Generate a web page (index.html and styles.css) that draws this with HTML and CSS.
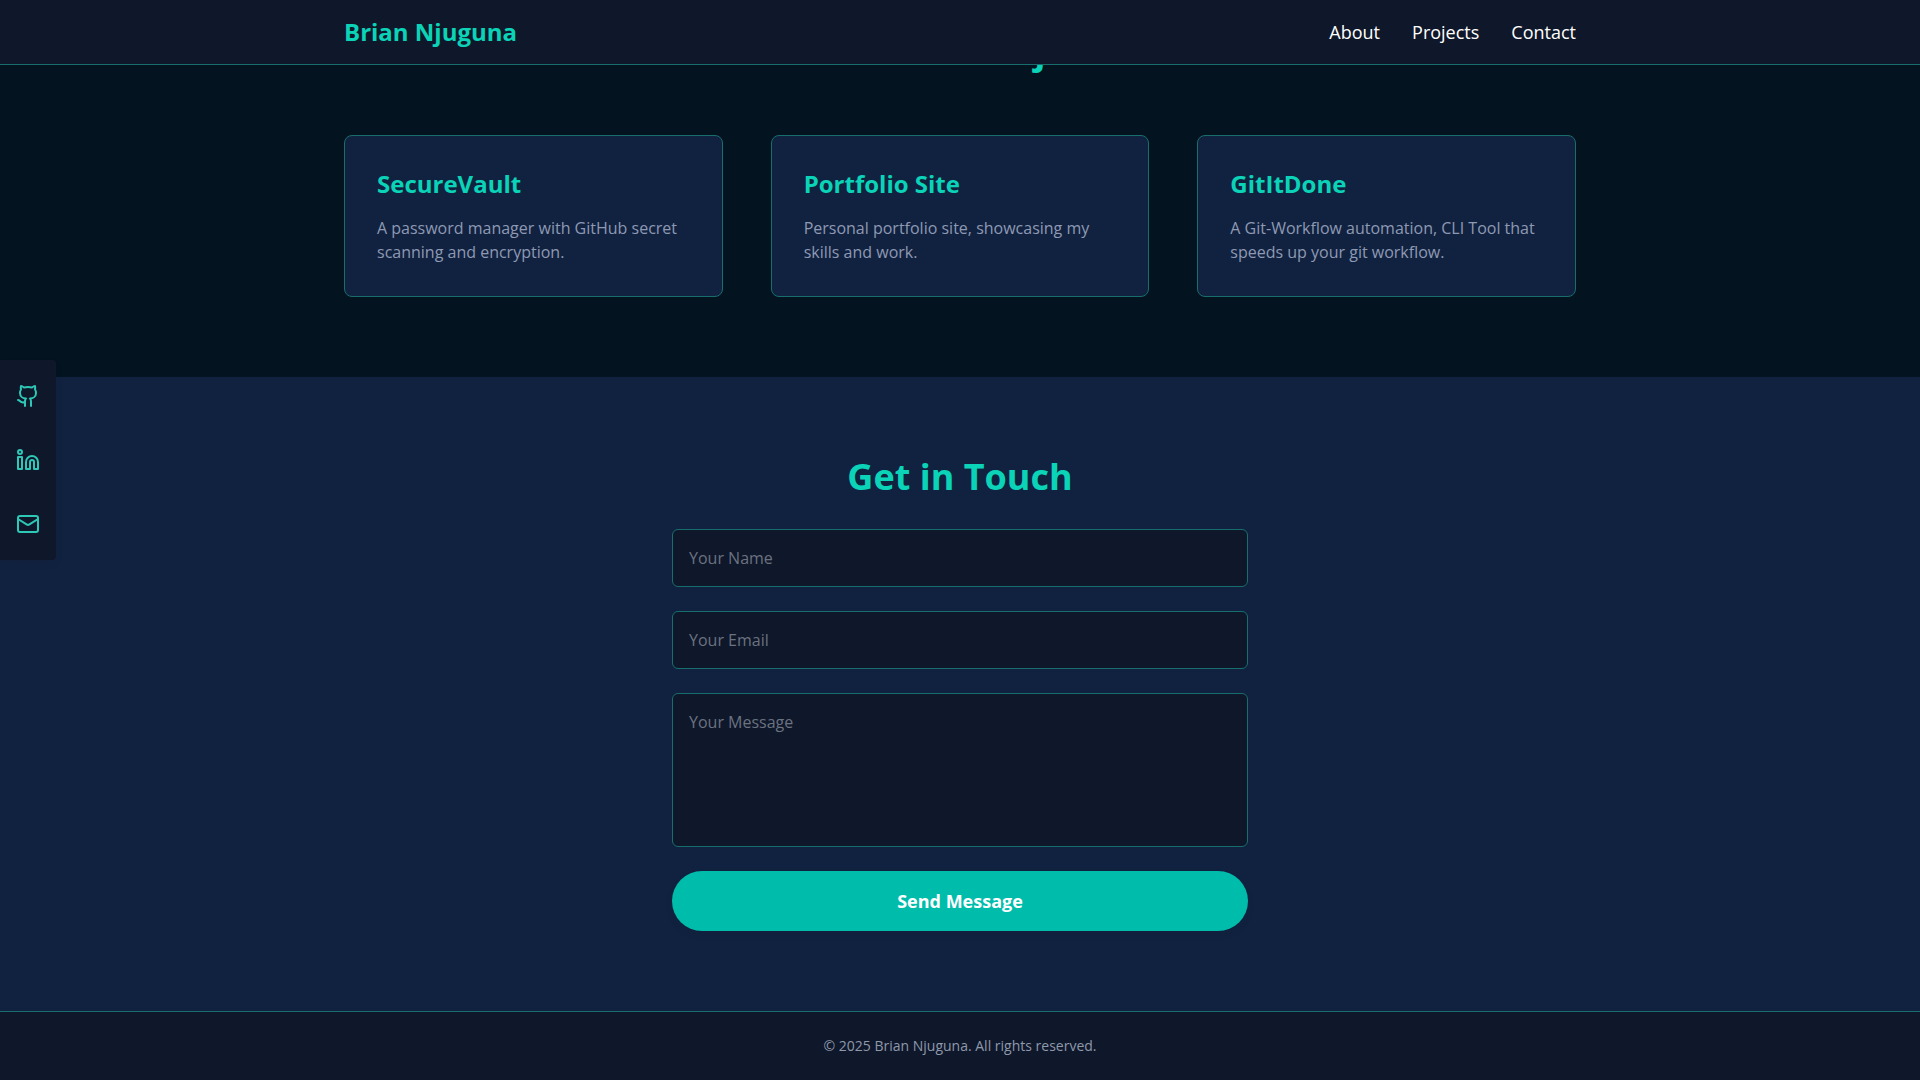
FILE: index.html
```html
<!DOCTYPE html>
<html lang="en">
<head>
  <meta charset="UTF-8">
  <meta name="viewport" content="width=device-width, initial-scale=1.0">
  <title>Brian Njuguna</title>
  <link rel="stylesheet" href="styles.css">
</head>
<body>
  <header class="navbar">
    <div class="container navbar-inner">
      <a class="logo" href="#">Brian Njuguna</a>
      <nav class="nav-links">
        <a href="#about">About</a>
        <a href="#projects">Projects</a>
        <a href="#contact">Contact</a>
      </nav>
    </div>
  </header>

  <!-- Social links -->
  <aside class="social">
    <a href="#github" aria-label="GitHub">
      <svg class="icon" viewBox="0 0 24 24">
        <path d="M15 22v-4a4.8 4.8 0 0 0-1-3.500c3 0 6-2 6-5.500.08-1.250-.27-2.480-1-3.500.28-1.150.28-2.350 0-3.500 0 0-1 0-3 1.500-2.640-.5-5.360-.5-8 0C6 2 5 2 5 2c-.3 1.150-.3 2.350 0 3.500A5.403 5.403 0 0 0 4 9c0 3.500 3 5.500 6 5.500-.39.490-.68 1.050-.85 1.650-.17.600-.22 1.230-.15 1.850v4"/>
        <path d="M9 18c-4.510 2-5-2-7-2"/>
      </svg>
    </a>
    <a href="#linkedin" aria-label="LinkedIn">
      <svg class="icon" viewBox="0 0 24 24">
        <path d="M16 8a6 6 0 0 1 6 6v7h-4v-7a2 2 0 0 0-4 0v7h-4v-7a6 6 0 0 1 6-6z"/>
        <rect x="2" y="9" width="4" height="12"/>
        <circle cx="4" cy="4" r="2"/>
      </svg>
    </a>
    <a href="#email" aria-label="Email">
      <svg class="icon" viewBox="0 0 24 24">
        <rect x="2" y="4" width="20" height="16" rx="2"/>
        <path d="m22 7-8.970 5.700a1.940 1.940 0 0 1-2.060 0L2 7"/>
      </svg>
    </a>
  </aside>

  <main>
    <section class="projects" id="projects">
      <div class="container">
        <h2>Featured Projects</h2>
        <div class="project-grid">
          <article class="card">
            <h3>SecureVault</h3>
            <p>A password manager with GitHub secret scanning and encryption.</p>
          </article>
          <article class="card">
            <h3>Portfolio Site</h3>
            <p>Personal portfolio site, showcasing my skills and work.</p>
          </article>
          <article class="card">
            <h3>GitItDone</h3>
            <p>A Git-Workflow automation, CLI Tool that speeds up your git workflow.</p>
          </article>
        </div>
      </div>
    </section>

    <section class="contact" id="contact">
      <h2>Get in Touch</h2>
      <form class="contact-form" action="#" method="post">
        <input type="text" name="name" placeholder="Your Name" aria-label="Your Name" required>
        <input type="email" name="email" placeholder="Your Email" aria-label="Your Email" required>
        <textarea name="message" rows="5" placeholder="Your Message" aria-label="Your Message" required></textarea>
        <button type="submit">Send Message</button>
      </form>
    </section>
  </main>

  <footer class="footer">
    <p>© 2025 Brian Njuguna. All rights reserved.</p>
  </footer>
</body>
</html>
```
FILE: styles.css
```css
* {
  box-sizing: border-box;
  margin: 0;
  padding: 0;
}

body {
  font-family: "Open Sans", sans-serif;
  font-size: 16px;
  line-height: 24px;
  color: #ffffff;
  background-color: #041320;
}

a {
  color: inherit;
  text-decoration: none;
}

h2 {
  font-size: 36px;
  line-height: 40px;
  font-weight: bold;
  text-align: center;
  color: #0ad3b8;
}

.container {
  max-width: 1280px;
  margin: 0 auto;
  padding: 0 24px;
}

/* Navbar */
.navbar {
  position: fixed;
  top: 0;
  left: 0;
  right: 0;
  z-index: 10;
  background-color: #0f172a;
  border-bottom: 1px solid #176e6c;
}

.navbar-inner {
  display: flex;
  justify-content: space-between;
  align-items: center;
  padding-top: 16px;
  padding-bottom: 16px;
}

.logo {
  font-size: 24px;
  line-height: 32px;
  font-weight: bold;
  color: #0ad3b8;
}

.nav-links {
  display: flex;
  gap: 32px;
  font-size: 18px;
  line-height: 28px;
}

.nav-links a:hover {
  color: #0ad3b8;
}

/* Social links */
.social {
  position: fixed;
  top: 33.333%;
  left: 0;
  z-index: 5;
  display: flex;
  flex-direction: column;
  gap: 40px;
  padding: 24px 16px;
  background-color: #0f172a;
  border-radius: 0 4px 4px 0;
  box-shadow: 0 4px 8px rgba(0, 0, 0, 0.05);
}

.icon {
  display: block;
  width: 24px;
  height: 24px;
  fill: none;
  stroke: #2dc8b6;
  stroke-width: 2;
  stroke-linecap: round;
  stroke-linejoin: round;
}

/* Projects */
.projects {
  padding: 31px 0 80px;
}

.project-grid {
  display: grid;
  grid-template-columns: repeat(3, 1fr);
  gap: 48px;
  margin-top: 64px;
}

.card {
  padding: 32px;
  background-color: #112240;
  border: 1px solid #176e6c;
  border-radius: 8px;
}

.card h3 {
  margin-bottom: 16px;
  font-size: 24px;
  line-height: 32px;
  color: #0ad3b8;
}

.card p {
  color: #8e99b3;
}

/* Contact */
.contact {
  padding: 80px 24px;
  background-color: #112240;
}

.contact-form {
  display: flex;
  flex-direction: column;
  gap: 24px;
  max-width: 576px;
  margin: 32px auto 0;
}

.contact-form input,
.contact-form textarea {
  width: 100%;
  padding: 16px;
  font: inherit;
  color: #ffffff;
  background-color: #0f172a;
  border: 1px solid #176e6c;
  border-radius: 6px;
  outline: none;
  resize: none;
}

.contact-form input {
  height: 58px;
}

.contact-form ::placeholder {
  color: #6b7280;
}

.contact-form button {
  padding: 16px;
  font-family: inherit;
  font-size: 18px;
  line-height: 28px;
  font-weight: bold;
  color: #ffffff;
  background-color: #00bdab;
  border: none;
  border-radius: 30px;
  box-shadow: 0 4px 8px rgba(0, 0, 0, 0.05);
  cursor: pointer;
}

/* Footer */
.footer {
  padding: 24px;
  font-size: 14px;
  line-height: 20px;
  text-align: center;
  color: #8e99ab;
  background-color: #0f172a;
  border-top: 1px solid #176e6c;
}
```
